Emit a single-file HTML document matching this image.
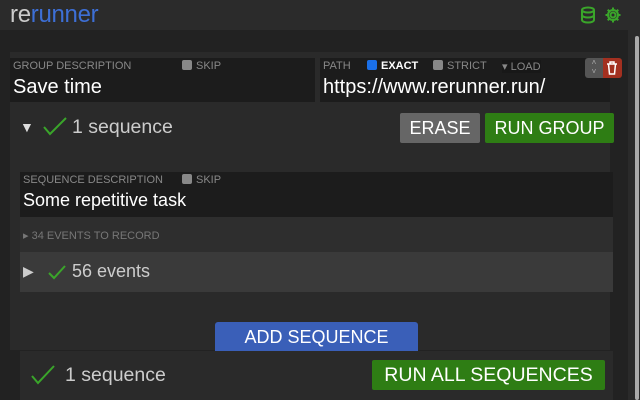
<!DOCTYPE html>
<html><head><style>
*{margin:0;padding:0;box-sizing:border-box}
body{width:640px;height:400px;overflow:hidden;background:#222;font-family:"Liberation Sans",sans-serif;position:relative;color:#ddd}
.a{position:absolute}
.lbl{font-size:11px;color:#888}
.cb{display:inline-block;width:10px;height:10px;background:#888;border-radius:2px;vertical-align:-1px;margin-right:4px}
</style></head><body>
<div class="a" style="left:0;top:0;width:640px;height:30px;background:#2b2b2b"></div>
<div class="a" style="left:10px;top:1px;font-size:24px;letter-spacing:-0.3px"><span style="color:#ccc">re</span><span style="color:#3d6fd6">runner</span></div>
<svg class="a" style="left:580px;top:6px" width="16" height="18" viewBox="0 0 16 18" fill="none" stroke="#3aa52a" stroke-width="2"><ellipse cx="8" cy="4" rx="6" ry="2.5"/><path d="M2 4v10c0 1.4 2.7 2.5 6 2.5s6-1.1 6-2.5V4M2 9c0 1.4 2.7 2.5 6 2.5s6-1.1 6-2.5"/></svg>
<svg class="a" style="left:604px;top:6px" width="18" height="18" viewBox="0 0 18 18" fill="none" stroke="#3aa52a" stroke-width="2"><circle cx="9" cy="9" r="2.5"/><path d="M9 1.5v2.5M9 14v2.5M1.5 9H4M14 9h2.5M3.7 3.7l1.8 1.8M12.5 12.5l1.8 1.8M3.7 14.3l1.8-1.8M12.5 5.5l1.8-1.8"/><circle cx="9" cy="9" r="5"/></svg>
<div class="a" style="left:628px;top:30px;width:12px;height:370px;background:#2a2a2a"></div>
<div class="a" style="left:635px;top:36px;width:4px;height:364px;background:#aaa;border-radius:2px"></div>

<div class="a" style="left:10px;top:52px;width:600px;height:298px;background:#2a2a2a"></div>
<div class="a" style="left:10px;top:58px;width:305px;height:44px;background:#1c1c1c"></div>
<div class="a lbl" style="left:13px;top:60px">GROUP DESCRIPTION</div>
<div class="a lbl" style="left:182px;top:60px"><span class="cb"></span>SKIP</div>
<div class="a" style="left:13px;top:76px;font-size:20px;color:#fff">Save time</div>
<div class="a" style="left:320px;top:58px;width:290px;height:44px;background:#1c1c1c"></div>
<div class="a lbl" style="left:323px;top:60px">PATH</div>
<div class="a lbl" style="left:367px;top:60px;color:#fff;font-weight:bold"><span class="cb" style="background:#1a6fe8"></span>EXACT</div>
<div class="a lbl" style="left:433px;top:60px"><span class="cb"></span>STRICT</div>
<div class="a lbl" style="left:502px;top:60px;background:#181818">▾ LOAD</div>
<div class="a" style="left:323px;top:76px;font-size:20px;color:#fff">https://www.rerunner.run/</div>
<div class="a" style="left:585px;top:58px;width:18px;height:20px;background:#555;border-radius:3px 0 0 3px;color:#aaa;font-size:8px;line-height:9px;text-align:center">˄<br>˅</div>
<div class="a" style="left:603px;top:58px;width:19px;height:20px;background:#a33020;border-radius:0 3px 3px 0"></div>
<svg class="a" style="left:606px;top:61px" width="12" height="14" viewBox="0 0 12 14" fill="none" stroke="#fff" stroke-width="1.5"><path d="M1 3h10M4 3V1h4v2M2.5 3l1 10h5l1-10"/></svg>

<div class="a" style="left:20px;top:119px;font-size:14px;color:#ddd">▼</div>
<svg class="a" style="left:42px;top:116px" width="26" height="20"><path d="M2 11l6 7L24 2" stroke="#3aa52a" stroke-width="2" fill="none"/></svg>
<div class="a" style="left:72px;top:116px;font-size:19.5px;color:#ccc">1 sequence</div>
<div class="a" style="left:400px;top:113px;width:80px;height:30px;background:#666;border-radius:2px;color:#fff;font-size:18px;text-align:center;line-height:30px">ERASE</div>
<div class="a" style="left:485px;top:113px;width:129px;height:30px;background:#2e7d14;border-radius:2px;color:#fff;font-size:18px;text-align:center;line-height:30px">RUN GROUP</div>

<div class="a" style="left:20px;top:172px;width:593px;height:45px;background:#1c1c1c"></div>
<div class="a lbl" style="left:23px;top:174px">SEQUENCE DESCRIPTION</div>
<div class="a lbl" style="left:182px;top:174px"><span class="cb"></span>SKIP</div>
<div class="a" style="left:23px;top:190px;font-size:18px;color:#fff">Some repetitive task</div>
<div class="a" style="left:20px;top:217px;width:593px;height:35px;background:#2e2e2e"></div>
<div class="a lbl" style="left:23px;top:229px;color:#777">▸ 34 EVENTS TO RECORD</div>
<div class="a" style="left:20px;top:252px;width:593px;height:40px;background:#3a3a3a"></div>
<div class="a" style="left:23px;top:263px;font-size:14px;color:#ccc">▶</div>
<svg class="a" style="left:47px;top:264px" width="20" height="16"><path d="M2 9l5 5L18 2" stroke="#3aa52a" stroke-width="2" fill="none"/></svg>
<div class="a" style="left:72px;top:261px;font-size:18px;color:#ccc">56 events</div>

<div class="a" style="left:215px;top:322px;width:203px;height:30px;background:#3a5fb8;border-radius:3px 3px 0 0;color:#fff;font-size:18px;text-align:center;line-height:30px">ADD SEQUENCE</div>
<div class="a" style="left:20px;top:351px;width:593px;height:49px;background:#2a2a2a"></div>
<svg class="a" style="left:30px;top:364px" width="26" height="22"><path d="M2 12l6 7L24 2" stroke="#3aa52a" stroke-width="2" fill="none"/></svg>
<div class="a" style="left:65px;top:364px;font-size:19.5px;color:#ccc">1 sequence</div>
<div class="a" style="left:372px;top:360px;width:233px;height:30px;background:#2e7d14;border-radius:2px;color:#fff;font-size:19.5px;text-align:center;line-height:30px">RUN ALL SEQUENCES</div>
</body></html>
